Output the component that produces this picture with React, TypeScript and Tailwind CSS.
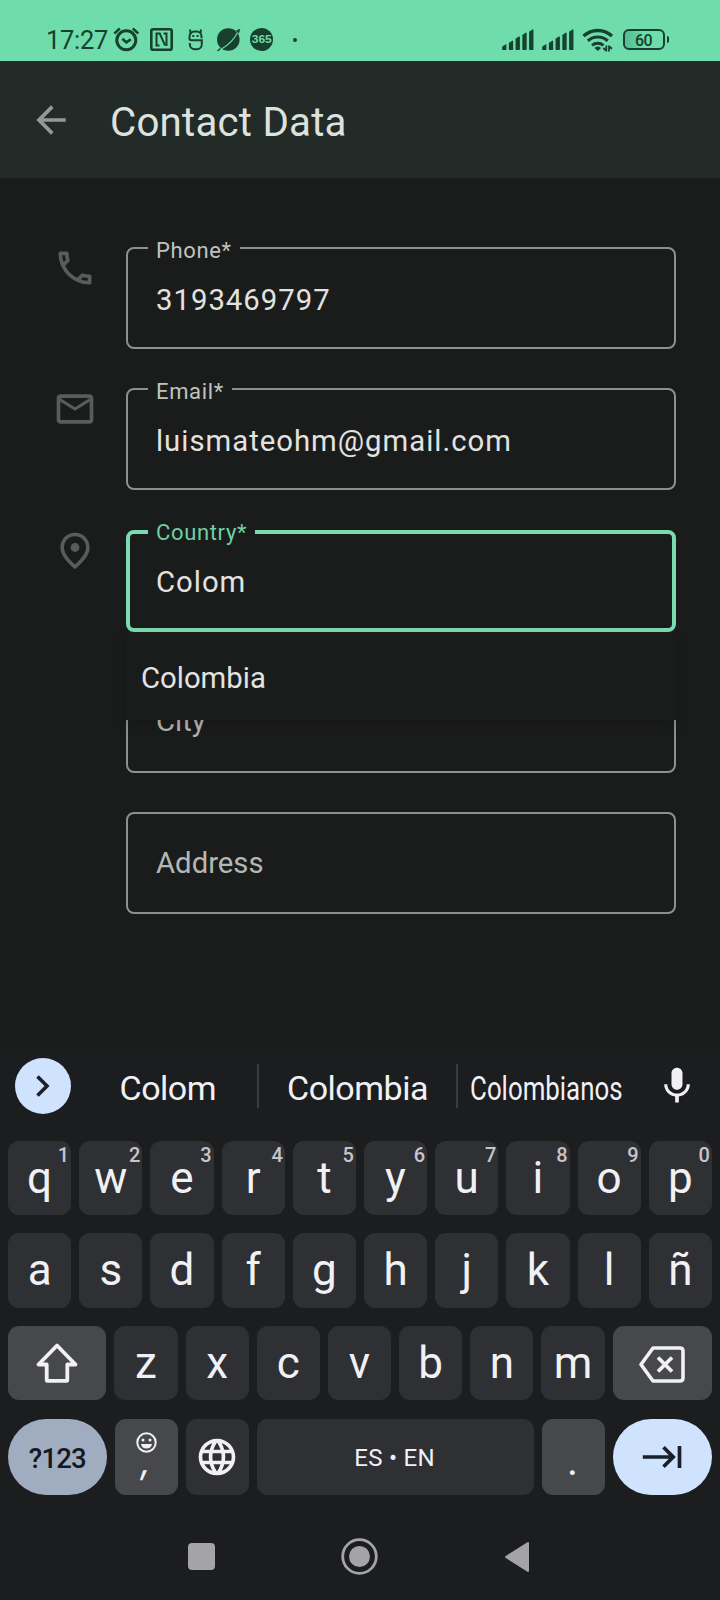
import type { ReactNode } from "react";
import {
  MdArrowBack,
  MdKeyboardTab,
  MdLanguage,
  MdMic,
  MdOutlineLocalPhone,
  MdOutlineMail,
} from "react-icons/md";

function SignalBars() {
  return (
    <svg width="32" height="21" viewBox="0 0 32 21" fill="currentColor" stroke="currentColor" strokeWidth="1.300" strokeLinejoin="round">
      <path d="M.8 20.300v-2.300l3-2v4.300zM7.500 20.300v-6l3-2v8zM14.200 20.300V10l3-2v12.300zM21 20.300V6.300l3-2v16zM27.800 20.300V3l3-2v19.300z" />
    </svg>
  );
}

function StatusBar() {
  return (
    <header className="flex h-[61px] items-center bg-[#6edcab] pt-[18px] pl-[46px] text-[#17402f]">
      <span className="w-[67px] pt-[2px] text-[25.500px] leading-none tracking-[-0.300px]">17:27</span>
      <svg width="27" height="25" viewBox="0 0 27 25" fill="none" stroke="currentColor">
        <circle cx="13.300" cy="13.300" r="9.500" strokeWidth="3" />
        <path d="M1.300 6.500l5.500-5M25.300 6.500l-5.500-5" strokeWidth="2.400" />
        <path d="M9.300 11.800l4 3.500 4.500-3" strokeWidth="2.600" />
      </svg>
      <svg className="ml-[10px]" width="23" height="23" viewBox="0 0 23 23" fill="none" stroke="currentColor">
        <rect x="1.300" y="1.300" width="20.400" height="20.400" rx="1.800" strokeWidth="2.600" />
        <path d="M9.500 17.500H6.500V5.500h3.300L15 17.300M16.500 18V5.500H13.500" strokeWidth="2" />
      </svg>
      <svg className="ml-[14px]" width="17" height="22" viewBox="0 0 17 22" fill="none" stroke="currentColor" strokeWidth="2">
        <path d="M14.500 9.300V7.500a5 5 0 0 0-5-5h-2a5 5 0 0 0-5 5v2q0 1.800 1.800 1.800h10.500v4a5 5 0 0 1-5 5h-2a5 5 0 0 1-5-5V14" />
        <path d="M3.500 4L3 .5M13.500 4l.5-3.500" />
        <path d="M5.300 7h2M9.600 7h2" strokeWidth="1.800" />
      </svg>
      <svg className="ml-[12px]" width="25" height="25" viewBox="0 0 25 25">
        <circle cx="12.300" cy="12.500" r="11.300" fill="currentColor" />
        <path d="M20 3.500l4.300-1.800-1.500 5z" fill="currentColor" />
        <path d="M21.500 5.500C18 12.500 12.500 18 5.500 22" stroke="#6edcab" strokeWidth="1.100" fill="none" />
        <path d="M4.500 21.500l-3 2.500" stroke="currentColor" strokeWidth="1.500" />
      </svg>
      <span className="ml-[9px] flex size-[23px] items-center justify-center rounded-full bg-[#17402f]">
        <span className="font-['Liberation_Sans'] text-[10.500px] leading-none font-bold text-[#6edcab] [transform:scaleX(1.15)]">365</span>
      </span>
      <span className="ml-[20px] size-[4px] rounded-full bg-[#17402f]" />
      <span className="ml-auto flex items-center pr-[51px]">
        <SignalBars />
        <span className="ml-[8px] flex">
          <SignalBars />
        </span>
        <svg className="ml-[8px]" width="32" height="24" viewBox="0 0 32 24" fill="none" stroke="currentColor">
          <path d="M1.500 8a21 21 0 0 1 28.500 0" strokeWidth="3.400" />
          <path d="M5.800 12.800a15 15 0 0 1 20 0" strokeWidth="3.200" />
          <path d="M10 17.300a9 9 0 0 1 11.500 0" strokeWidth="3" />
          <path d="M12.500 20l3.300 3 3.300-3a5 5 0 0 0-6.600 0z" fill="currentColor" stroke="none" />
          <path d="M24.300 17.500v6M27 17.500v6M24.300 22.800l-3-2.800M27 18.300l3 2.500" strokeWidth="1.800" />
        </svg>
        <span className="ml-[9px] flex h-[21px] w-[42px] items-center justify-center rounded-[6px] border-2 border-[#17402f] bg-linear-to-r from-[#58c294] from-10% to-[#6edcab] to-50% pt-[3px] text-[16px] leading-none font-medium tracking-[-0.500px]">60</span>
        <span className="ml-[2px] h-[7px] w-[2.500px] rounded-r-sm bg-[#17402f]" />
      </span>
    </header>
  );
}

function Field({
  icon,
  label,
  value,
  active = false,
}: {
  icon?: ReactNode;
  label: string;
  value?: string;
  active?: boolean;
}) {
  return (
    <div className="flex h-[102px]">
      <span className="mt-[-1px] w-[73.500px] text-[#5a5c5a]">{icon}</span>
      <div
        className={
          active
            ? "relative flex w-[550px] items-center rounded-[8px] border-4 border-[#7adbb0] pl-[26px]"
            : "relative flex w-[550px] items-center rounded-[8px] border-2 border-[#8b918d] pl-[28px]"
        }
      >
        {value !== undefined && (
          <span
            className={
              active
                ? "absolute top-[-13px] left-[18px] bg-[#1a1c1b] px-[8px] text-[22px] leading-[24px] tracking-[0.650px] text-[#6fd0a6]"
                : "absolute top-[-10.500px] left-[20px] bg-[#1a1c1b] px-[8px] text-[22px] leading-[24px] tracking-[0.650px] text-[#bfc3c0]"
            }
          >
            {label}
          </span>
        )}
        <span
          className={
            value !== undefined
              ? "pt-[5px] text-[29.300px] tracking-[1px] text-[#e2e3e0]"
              : "pt-px text-[29.300px] tracking-[0px] text-[#b4b8b4]"
          }
        >
          {value ?? label}
        </span>
      </div>
    </div>
  );
}

function PinIcon() {
  return (
    <svg className="size-[44px]" viewBox="0 0 24 24" fill="currentColor">
      <path d="M12 2c4.200 0 8 3.220 8 8.200 0 3.320-2.670 7.250-8 11.800-5.330-4.550-8-8.480-8-11.800C4 5.220 7.800 2 12 2m6 8.200C18 6.570 15.350 4 12 4s-6 2.570-6 6.200c0 2.340 1.950 5.440 6 9.140 4.050-3.700 6-6.800 6-9.140M12 12.500c-1.400 0-2.400-1.100-2.400-2.400s1.100-2.400 2.400-2.400 2.400 1.100 2.400 2.400-1 2.400-2.400 2.400" />
    </svg>
  );
}

function Key({ char, hint }: { char: string; hint?: string }) {
  return (
    <div className="relative flex h-full w-[63.200px] items-center justify-center rounded-[11px] bg-[#2f3034]">
      <span className="mt-[-1px] text-[44px] leading-none">{char}</span>
      {hint && (
        <span className="absolute top-[4px] right-[2px] text-[20px] leading-[21px] font-medium text-[#c6c6ca]">{hint}</span>
      )}
    </div>
  );
}

const topRow = ["q", "w", "e", "r", "t", "y", "u", "i", "o", "p"];
const homeRow = ["a", "s", "d", "f", "g", "h", "j", "k", "l", "ñ"];
const bottomRow = ["z", "x", "c", "v", "b", "n", "m"];

function Keyboard() {
  return (
    <section className="h-[553px] bg-[#1c1d1f] text-[#f1f1f5]">
      <div className="flex h-[94px] items-center pl-[14.500px] text-[34px] leading-none">
        <span className="mt-[-17px] flex size-[56px] items-center justify-center rounded-full bg-[#cfe3ff]">
          <svg width="16" height="24" viewBox="0 0 16 24" fill="none" stroke="#1a1f29" strokeWidth="3.600">
            <path d="M2.500 2.500l9.500 9.500-9.500 9.500" />
          </svg>
        </span>
        <span className="mt-[-13px] ml-[8px] w-[178.500px] text-center tracking-[-0.500px]">Colom</span>
        <span className="mt-[-17px] h-[44px] w-[2px] bg-[#3b3c3f]" />
        <span className="mt-[-13px] w-[197px] text-center tracking-[-0.500px]">Colombia</span>
        <span className="mt-[-17px] h-[44px] w-[2px] bg-[#3b3c3f]" />
        <span className="mt-[-13px] flex w-[177px] justify-center">
          <span className="[transform:scaleX(0.76)]">Colombianos</span>
        </span>
        <MdMic className="mt-[-17px] ml-[19.500px] size-[44px]" />
      </div>

      <div className="flex flex-col gap-[18.200px] px-[8px]">
        <div className="flex h-[74.200px] gap-[8px]">
          {topRow.map((c, i) => (
            <Key key={c} char={c} hint={String((i + 1) % 10)} />
          ))}
        </div>
        <div className="flex h-[74.200px] gap-[8px]">
          {homeRow.map((c) => (
            <Key key={c} char={c} />
          ))}
        </div>
        <div className="flex h-[74.700px] gap-[8px]">
          <div className="flex flex-1 items-center justify-center rounded-[11px] bg-[#47484b]">
            <svg width="42" height="40" viewBox="0 0 42 40" fill="none" stroke="currentColor" strokeWidth="3.800" strokeLinejoin="round">
              <path d="M21 2.500L2.500 21.500h8.200V37q0 .8.800.8h19q.8 0 .8-.8V21.500h8.200z" />
            </svg>
          </div>
          {bottomRow.map((c) => (
            <Key key={c} char={c} />
          ))}
          <div className="flex flex-1 items-center justify-center rounded-[11px] bg-[#47484b] pt-[2px] pr-[1px]">
            <svg width="46" height="37" viewBox="0 0 46 37" fill="none" stroke="currentColor" strokeLinejoin="round">
              <path d="M14 2h27q3 0 3 3v27q0 3-3 3H14L2 18.500z" strokeWidth="3.600" />
              <path d="M19 11.500l14 14M33 11.500l-14 14" strokeWidth="3.800" />
            </svg>
          </div>
        </div>
        <div className="flex h-[76.500px] gap-[8px]">
          <div className="flex w-[98.800px] items-center justify-center rounded-full bg-[#a0adc1] pt-[3px] text-[27.500px] tracking-[-0.800px] text-[#14181f]">
            <span className="font-medium">?123</span>
          </div>
          <div className="flex w-[63.200px] flex-col items-center rounded-[11px] bg-[#47484b] pt-[13px]">
            <svg width="21" height="21" viewBox="0 0 21 21" fill="none">
              <circle cx="10.500" cy="10.500" r="9.200" stroke="currentColor" strokeWidth="2" />
              <circle cx="7" cy="8" r="1.500" fill="currentColor" />
              <circle cx="14" cy="8" r="1.500" fill="currentColor" />
              <path d="M5 12h11a5.600 5.600 0 0 1-11 0z" fill="currentColor" />
            </svg>
            <span className="mt-[-11px] font-['Inter'] text-[36px] leading-[38px] [transform:skewX(-10deg)]">,</span>
          </div>
          <div className="flex w-[63.200px] items-center justify-center rounded-[11px] bg-[#2f3034] pr-[1px]">
            <MdLanguage className="size-[44px]" />
          </div>
          <div className="flex flex-1 items-center justify-center rounded-[11px] bg-[#2f3034] pt-[3px] pr-[2px] text-[24px]">
            <span className="tracking-[0.300px]">ES • EN</span>
          </div>
          <div className="flex w-[63.200px] items-center justify-center rounded-[11px] bg-[#47484b] pt-[8px] pr-[2px] text-[42px] leading-none">
            .
          </div>
          <div className="flex w-[98.800px] items-center justify-center rounded-full bg-[#cfe3ff] text-[#1a1f29]">
            <MdKeyboardTab className="size-[44px]" />
          </div>
        </div>
      </div>

      <nav className="mt-[43px] flex items-center pl-[188px] text-[#a4a4a6]">
        <span className="size-[27px] rounded-[4px] bg-[#a4a4a6]" />
        <svg className="ml-[126px]" width="37" height="37" viewBox="0 0 37 37">
          <circle cx="18.500" cy="18.500" r="16.800" fill="none" stroke="currentColor" strokeWidth="2.800" />
          <circle cx="18.500" cy="18.500" r="10.500" fill="currentColor" />
        </svg>
        <svg className="ml-[126px]" width="26" height="32" viewBox="0 0 26 32">
          <path d="M24 2v28L2 16z" fill="currentColor" stroke="currentColor" strokeWidth="2" strokeLinejoin="round" />
        </svg>
      </nav>
    </section>
  );
}

export default function App() {
  return (
    <div className="flex h-[1600px] w-[720px] flex-col overflow-hidden bg-[#1a1c1b] font-['Roboto',sans-serif]">
      <StatusBar />
      <div className="flex h-[117px] items-center bg-[#222b27] pl-[29px]">
        <MdArrowBack className="size-[44px] text-[#949a96]" />
        <h1 className="ml-[37px] pt-[7px] text-[40.300px] leading-none tracking-[0.200px] text-[#dee2de]">Contact Data</h1>
      </div>
      <main className="h-[869px] pt-[69px] pl-[52.500px]">
        <div className="flex flex-col gap-[39.300px]">
          <Field icon={<MdOutlineLocalPhone className="size-[44px]" />} label="Phone*" value="3193469797" />
          <Field icon={<MdOutlineMail className="size-[44px]" />} label="Email*" value="luismateohm@gmail.com" />
          <div className="relative">
            <Field icon={<PinIcon />} label="Country*" value="Colom" active />
            <div className="absolute top-[102px] left-[73.500px] z-10 flex h-[88px] w-[550px] items-center bg-[#1a1c1b] pt-[6px] pl-[15px] text-[29.300px] text-[#e2e3e0] shadow-[0_6px_12px_rgba(0,0,0,0.16)]">
              <span>Colombia</span>
            </div>
          </div>
          <Field label="City" />
          <Field label="Address" />
        </div>
      </main>
      <Keyboard />
    </div>
  );
}
